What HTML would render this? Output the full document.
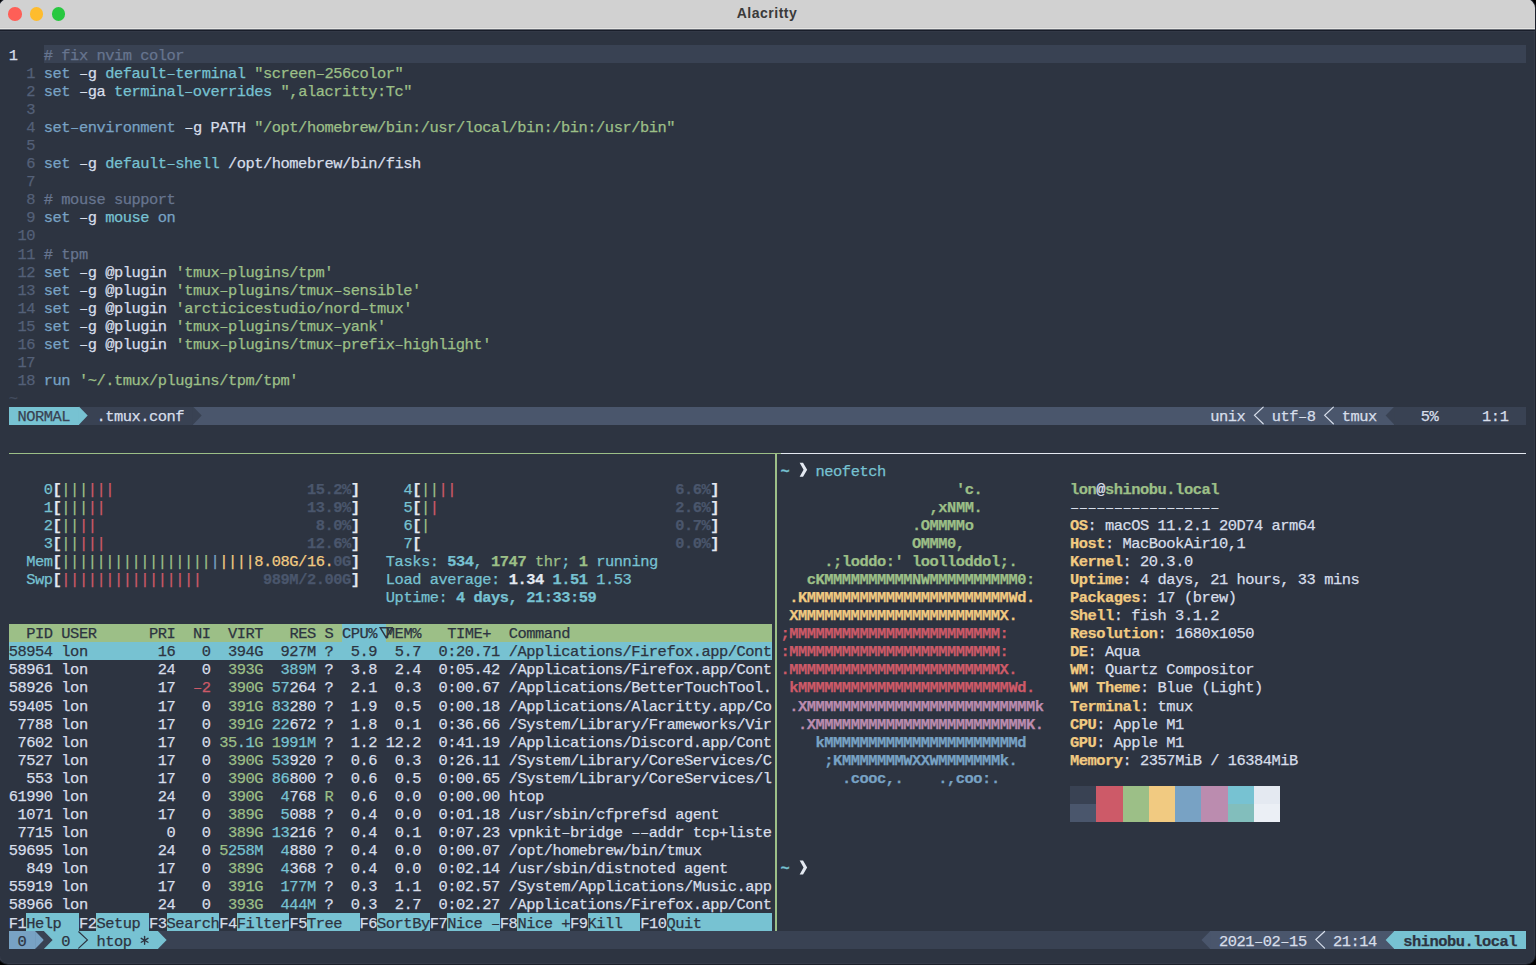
<!DOCTYPE html><html><head><meta charset="utf-8"><style>
html,body{margin:0;padding:0;background:#000;width:1536px;height:965px;overflow:hidden}
#win{position:absolute;left:-1px;top:-1px;width:1536px;height:965px;border-radius:9px;overflow:hidden;background:#2D3441;box-shadow:0 0 0 1px #1D212B}
#wb{position:absolute;left:0;top:0;width:1536px;height:965px;border-radius:9px;box-shadow:inset 0 0 0 1px rgba(230,235,255,0.045);pointer-events:none}
#tb{position:absolute;left:-1px;top:-1px;width:1538px;height:28px;background:#D1D1D1}
.hl{position:absolute;left:0;width:1538px;height:1px}
#title{position:absolute;left:-1.0px;top:-1.2px;letter-spacing:0.5px;width:1536px;height:28px;text-align:center;font:bold 14px "Liberation Sans",sans-serif;line-height:28px;color:#3A3A3A}
.d{position:absolute;width:13.6px;height:13.6px;border-radius:50%;top:7.2px}
.r{position:absolute}
.t{position:absolute;white-space:pre;font-family:"Liberation Mono",monospace;font-size:15.40px;letter-spacing:-0.4715px;line-height:18.080px;height:18.080px}
.b{font-weight:bold}
.t{-webkit-text-stroke:0.25px currentColor}
svg{position:absolute;left:0;top:0}

</style></head><body><div id="win"><div style="position:absolute;left:1px;top:1px;width:1536px;height:965px">
<div id="tb"></div>
<div class="hl" style="top:27px;background:#CDCDCD"></div>
<div class="hl" style="top:28px;background:#E6E6E4"></div>
<div class="hl" style="top:29px;background:#6A6E76"></div>
<div class="hl" style="top:30px;background:#181D29"></div>
<div class="hl" style="top:31px;background:#323846"></div>
<div id="title">Alacritty</div>
<div class="d" style="left:8.0px;background:#FE5F57"></div>
<div class="d" style="left:29.9px;background:#FEBC2E"></div>
<div class="d" style="left:51.8px;background:#28C840"></div>
<div class="r" style="left:43.83px;top:44.97px;width:1482.13px;height:18.08px;background:#394253"></div>
<div class="r" style="left:8.75px;top:406.57px;width:1517.21px;height:18.08px;background:#4A566C"></div>
<div class="r" style="left:8.75px;top:406.57px;width:70.16px;height:18.08px;background:#77C2D2"></div>
<div class="r" style="left:78.91px;top:406.57px;width:114.01px;height:18.08px;background:#394253"></div>
<div class="r" style="left:1394.41px;top:406.57px;width:131.55px;height:18.08px;background:#394253"></div>
<div class="r" style="left:8.75px;top:452.90px;width:771.76px;height:1.20px;background:#9CBF87"></div>
<div class="r" style="left:780.51px;top:452.90px;width:745.45px;height:1.20px;background:#E4E9F1"></div>
<div class="r" style="left:775.45px;top:452.90px;width:1.30px;height:479.99px;background:#9CBF87"></div>
<div class="r" style="left:8.75px;top:623.53px;width:762.99px;height:18.08px;background:#9CBF87"></div>
<div class="r" style="left:342.01px;top:623.53px;width:43.85px;height:18.08px;background:#77C2D2"></div>
<div class="r" style="left:8.75px;top:641.61px;width:762.99px;height:18.08px;background:#77C2D2"></div>
<div class="r" style="left:26.29px;top:912.81px;width:52.62px;height:18.08px;background:#77C2D2"></div>
<div class="r" style="left:96.45px;top:912.81px;width:52.62px;height:18.08px;background:#77C2D2"></div>
<div class="r" style="left:166.61px;top:912.81px;width:52.62px;height:18.08px;background:#77C2D2"></div>
<div class="r" style="left:236.77px;top:912.81px;width:52.62px;height:18.08px;background:#77C2D2"></div>
<div class="r" style="left:306.93px;top:912.81px;width:52.62px;height:18.08px;background:#77C2D2"></div>
<div class="r" style="left:377.09px;top:912.81px;width:52.62px;height:18.08px;background:#77C2D2"></div>
<div class="r" style="left:447.25px;top:912.81px;width:52.62px;height:18.08px;background:#77C2D2"></div>
<div class="r" style="left:517.41px;top:912.81px;width:52.62px;height:18.08px;background:#77C2D2"></div>
<div class="r" style="left:587.57px;top:912.81px;width:52.62px;height:18.08px;background:#77C2D2"></div>
<div class="r" style="left:666.50px;top:912.81px;width:105.24px;height:18.08px;background:#77C2D2"></div>
<div class="r" style="left:1069.92px;top:786.25px;width:26.31px;height:18.08px;background:#394253"></div>
<div class="r" style="left:1069.92px;top:804.33px;width:26.31px;height:18.08px;background:#4A566C"></div>
<div class="r" style="left:1096.23px;top:786.25px;width:26.31px;height:18.08px;background:#CD5A68"></div>
<div class="r" style="left:1096.23px;top:804.33px;width:26.31px;height:18.08px;background:#CD5A68"></div>
<div class="r" style="left:1122.54px;top:786.25px;width:26.31px;height:18.08px;background:#9CBF87"></div>
<div class="r" style="left:1122.54px;top:804.33px;width:26.31px;height:18.08px;background:#9CBF87"></div>
<div class="r" style="left:1148.85px;top:786.25px;width:26.31px;height:18.08px;background:#F1CA81"></div>
<div class="r" style="left:1148.85px;top:804.33px;width:26.31px;height:18.08px;background:#F1CA81"></div>
<div class="r" style="left:1175.16px;top:786.25px;width:26.31px;height:18.08px;background:#78A2C4"></div>
<div class="r" style="left:1175.16px;top:804.33px;width:26.31px;height:18.08px;background:#78A2C4"></div>
<div class="r" style="left:1201.47px;top:786.25px;width:26.31px;height:18.08px;background:#BB8CAF"></div>
<div class="r" style="left:1201.47px;top:804.33px;width:26.31px;height:18.08px;background:#BB8CAF"></div>
<div class="r" style="left:1227.78px;top:786.25px;width:26.31px;height:18.08px;background:#77C2D2"></div>
<div class="r" style="left:1227.78px;top:804.33px;width:26.31px;height:18.08px;background:#82BEBC"></div>
<div class="r" style="left:1254.09px;top:786.25px;width:26.31px;height:18.08px;background:#E4E9F1"></div>
<div class="r" style="left:1254.09px;top:804.33px;width:26.31px;height:18.08px;background:#EBEFF5"></div>
<div class="r" style="left:8.75px;top:930.89px;width:1517.21px;height:18.08px;background:#394253"></div>
<div class="r" style="left:8.75px;top:930.89px;width:26.31px;height:18.08px;background:#78A2C4"></div>
<div class="r" style="left:43.83px;top:930.89px;width:114.01px;height:18.08px;background:#77C2D2"></div>
<div class="r" style="left:1210.24px;top:930.89px;width:184.17px;height:18.08px;background:#4A566C"></div>
<div class="r" style="left:1394.41px;top:930.89px;width:131.55px;height:18.08px;background:#77C2D2"></div>
<div class="t" style="left:8.75px;top:46.67px;color:#D7DEEA">1</div>
<div class="t" style="left:43.83px;top:46.67px;color:#67758F"># fix nvim color</div>
<div class="t" style="left:8.75px;top:64.75px;color:#546078">  1</div>
<div class="t" style="left:43.83px;top:64.75px;color:#78A2C4">set</div>
<div class="t" style="left:78.91px;top:64.75px;color:#D7DEEA">–g</div>
<div class="t" style="left:105.22px;top:64.75px;color:#77C2D2">default–terminal</div>
<div class="t" style="left:254.31px;top:64.75px;color:#9CBF87">&quot;screen–256color&quot;</div>
<div class="t" style="left:8.75px;top:82.83px;color:#546078">  2</div>
<div class="t" style="left:43.83px;top:82.83px;color:#78A2C4">set</div>
<div class="t" style="left:78.91px;top:82.83px;color:#D7DEEA">–ga</div>
<div class="t" style="left:113.99px;top:82.83px;color:#77C2D2">terminal–overrides</div>
<div class="t" style="left:280.62px;top:82.83px;color:#9CBF87">&quot;,alacritty:Tc&quot;</div>
<div class="t" style="left:8.75px;top:100.91px;color:#546078">  3</div>
<div class="t" style="left:8.75px;top:118.99px;color:#546078">  4</div>
<div class="t" style="left:43.83px;top:118.99px;color:#78A2C4">set–environment</div>
<div class="t" style="left:184.15px;top:118.99px;color:#D7DEEA">–g</div>
<div class="t" style="left:210.46px;top:118.99px;color:#D7DEEA">PATH</div>
<div class="t" style="left:254.31px;top:118.99px;color:#9CBF87">&quot;/opt/homebrew/bin:/usr/local/bin:/bin:/usr/bin&quot;</div>
<div class="t" style="left:8.75px;top:137.07px;color:#546078">  5</div>
<div class="t" style="left:8.75px;top:155.15px;color:#546078">  6</div>
<div class="t" style="left:43.83px;top:155.15px;color:#78A2C4">set</div>
<div class="t" style="left:78.91px;top:155.15px;color:#D7DEEA">–g</div>
<div class="t" style="left:105.22px;top:155.15px;color:#77C2D2">default–shell</div>
<div class="t" style="left:228.00px;top:155.15px;color:#D7DEEA">/opt/homebrew/bin/fish</div>
<div class="t" style="left:8.75px;top:173.23px;color:#546078">  7</div>
<div class="t" style="left:8.75px;top:191.31px;color:#546078">  8</div>
<div class="t" style="left:43.83px;top:191.31px;color:#67758F"># mouse support</div>
<div class="t" style="left:8.75px;top:209.39px;color:#546078">  9</div>
<div class="t" style="left:43.83px;top:209.39px;color:#78A2C4">set</div>
<div class="t" style="left:78.91px;top:209.39px;color:#D7DEEA">–g</div>
<div class="t" style="left:105.22px;top:209.39px;color:#77C2D2">mouse</div>
<div class="t" style="left:157.84px;top:209.39px;color:#78A2C4">on</div>
<div class="t" style="left:8.75px;top:227.47px;color:#546078"> 10</div>
<div class="t" style="left:8.75px;top:245.55px;color:#546078"> 11</div>
<div class="t" style="left:43.83px;top:245.55px;color:#67758F"># tpm</div>
<div class="t" style="left:8.75px;top:263.63px;color:#546078"> 12</div>
<div class="t" style="left:43.83px;top:263.63px;color:#78A2C4">set</div>
<div class="t" style="left:78.91px;top:263.63px;color:#D7DEEA">–g</div>
<div class="t" style="left:105.22px;top:263.63px;color:#D7DEEA">@plugin</div>
<div class="t" style="left:175.38px;top:263.63px;color:#9CBF87">&#x27;tmux–plugins/tpm&#x27;</div>
<div class="t" style="left:8.75px;top:281.71px;color:#546078"> 13</div>
<div class="t" style="left:43.83px;top:281.71px;color:#78A2C4">set</div>
<div class="t" style="left:78.91px;top:281.71px;color:#D7DEEA">–g</div>
<div class="t" style="left:105.22px;top:281.71px;color:#D7DEEA">@plugin</div>
<div class="t" style="left:175.38px;top:281.71px;color:#9CBF87">&#x27;tmux–plugins/tmux–sensible&#x27;</div>
<div class="t" style="left:8.75px;top:299.79px;color:#546078"> 14</div>
<div class="t" style="left:43.83px;top:299.79px;color:#78A2C4">set</div>
<div class="t" style="left:78.91px;top:299.79px;color:#D7DEEA">–g</div>
<div class="t" style="left:105.22px;top:299.79px;color:#D7DEEA">@plugin</div>
<div class="t" style="left:175.38px;top:299.79px;color:#9CBF87">&#x27;arcticicestudio/nord–tmux&#x27;</div>
<div class="t" style="left:8.75px;top:317.87px;color:#546078"> 15</div>
<div class="t" style="left:43.83px;top:317.87px;color:#78A2C4">set</div>
<div class="t" style="left:78.91px;top:317.87px;color:#D7DEEA">–g</div>
<div class="t" style="left:105.22px;top:317.87px;color:#D7DEEA">@plugin</div>
<div class="t" style="left:175.38px;top:317.87px;color:#9CBF87">&#x27;tmux–plugins/tmux–yank&#x27;</div>
<div class="t" style="left:8.75px;top:335.95px;color:#546078"> 16</div>
<div class="t" style="left:43.83px;top:335.95px;color:#78A2C4">set</div>
<div class="t" style="left:78.91px;top:335.95px;color:#D7DEEA">–g</div>
<div class="t" style="left:105.22px;top:335.95px;color:#D7DEEA">@plugin</div>
<div class="t" style="left:175.38px;top:335.95px;color:#9CBF87">&#x27;tmux–plugins/tmux–prefix–highlight&#x27;</div>
<div class="t" style="left:8.75px;top:354.03px;color:#546078"> 17</div>
<div class="t" style="left:8.75px;top:372.11px;color:#546078"> 18</div>
<div class="t" style="left:43.83px;top:372.11px;color:#78A2C4">run</div>
<div class="t" style="left:78.91px;top:372.11px;color:#9CBF87">&#x27;~/.tmux/plugins/tpm/tpm&#x27;</div>
<div class="t" style="left:8.75px;top:390.19px;color:#434C5E">~</div>
<div class="t" style="left:17.52px;top:408.27px;color:#394253">NORMAL</div>
<div class="t" style="left:96.45px;top:408.27px;color:#D7DEEA">.tmux.conf</div>
<div class="t" style="left:1210.24px;top:408.27px;color:#D7DEEA">unix</div>
<div class="t" style="left:1271.63px;top:408.27px;color:#D7DEEA">utf–8</div>
<div class="t" style="left:1341.79px;top:408.27px;color:#D7DEEA">tmux</div>
<div class="t" style="left:1420.72px;top:408.27px;color:#D7DEEA">5%</div>
<div class="t" style="left:1482.11px;top:408.27px;color:#D7DEEA">1:1</div>
<div class="t" style="left:43.83px;top:480.59px;color:#77C2D2">0</div>
<div class="t b" style="left:52.60px;top:480.59px;color:#E4E9F1">[</div>
<div class="t" style="left:61.37px;top:480.59px;color:#9CBF87">|||</div>
<div class="t" style="left:87.68px;top:480.59px;color:#CD5A68">|||</div>
<div class="t b" style="left:306.93px;top:480.59px;color:#4A566C">15.2%</div>
<div class="t b" style="left:350.78px;top:480.59px;color:#E4E9F1">]</div>
<div class="t" style="left:43.83px;top:498.67px;color:#77C2D2">1</div>
<div class="t b" style="left:52.60px;top:498.67px;color:#E4E9F1">[</div>
<div class="t" style="left:61.37px;top:498.67px;color:#9CBF87">|||</div>
<div class="t" style="left:87.68px;top:498.67px;color:#CD5A68">||</div>
<div class="t b" style="left:306.93px;top:498.67px;color:#4A566C">13.9%</div>
<div class="t b" style="left:350.78px;top:498.67px;color:#E4E9F1">]</div>
<div class="t" style="left:43.83px;top:516.75px;color:#77C2D2">2</div>
<div class="t b" style="left:52.60px;top:516.75px;color:#E4E9F1">[</div>
<div class="t" style="left:61.37px;top:516.75px;color:#9CBF87">||</div>
<div class="t" style="left:78.91px;top:516.75px;color:#CD5A68">||</div>
<div class="t b" style="left:306.93px;top:516.75px;color:#4A566C"> 8.0%</div>
<div class="t b" style="left:350.78px;top:516.75px;color:#E4E9F1">]</div>
<div class="t" style="left:43.83px;top:534.83px;color:#77C2D2">3</div>
<div class="t b" style="left:52.60px;top:534.83px;color:#E4E9F1">[</div>
<div class="t" style="left:61.37px;top:534.83px;color:#9CBF87">||</div>
<div class="t" style="left:78.91px;top:534.83px;color:#CD5A68">|||</div>
<div class="t b" style="left:306.93px;top:534.83px;color:#4A566C">12.6%</div>
<div class="t b" style="left:350.78px;top:534.83px;color:#E4E9F1">]</div>
<div class="t" style="left:26.29px;top:552.91px;color:#77C2D2">Mem</div>
<div class="t b" style="left:52.60px;top:552.91px;color:#E4E9F1">[</div>
<div class="t" style="left:61.37px;top:552.91px;color:#9CBF87">|||||||||||||||||</div>
<div class="t" style="left:210.46px;top:552.91px;color:#78A2C4">|</div>
<div class="t" style="left:219.23px;top:552.91px;color:#F1CA81">||||</div>
<div class="t" style="left:254.31px;top:552.91px;color:#F1CA81">8.08G/16.</div>
<div class="t b" style="left:333.24px;top:552.91px;color:#4A566C">0G</div>
<div class="t b" style="left:350.78px;top:552.91px;color:#E4E9F1">]</div>
<div class="t" style="left:26.29px;top:570.99px;color:#77C2D2">Swp</div>
<div class="t b" style="left:52.60px;top:570.99px;color:#E4E9F1">[</div>
<div class="t" style="left:61.37px;top:570.99px;color:#CD5A68">||||||||||||||||</div>
<div class="t b" style="left:263.08px;top:570.99px;color:#4A566C">989M/2.00G</div>
<div class="t b" style="left:350.78px;top:570.99px;color:#E4E9F1">]</div>
<div class="t" style="left:403.40px;top:480.59px;color:#77C2D2">4</div>
<div class="t b" style="left:412.17px;top:480.59px;color:#E4E9F1">[</div>
<div class="t" style="left:420.94px;top:480.59px;color:#9CBF87">||</div>
<div class="t" style="left:438.48px;top:480.59px;color:#CD5A68">||</div>
<div class="t b" style="left:675.27px;top:480.59px;color:#4A566C">6.6%</div>
<div class="t b" style="left:710.35px;top:480.59px;color:#E4E9F1">]</div>
<div class="t" style="left:403.40px;top:498.67px;color:#77C2D2">5</div>
<div class="t b" style="left:412.17px;top:498.67px;color:#E4E9F1">[</div>
<div class="t" style="left:420.94px;top:498.67px;color:#9CBF87">|</div>
<div class="t" style="left:429.71px;top:498.67px;color:#CD5A68">|</div>
<div class="t b" style="left:675.27px;top:498.67px;color:#4A566C">2.6%</div>
<div class="t b" style="left:710.35px;top:498.67px;color:#E4E9F1">]</div>
<div class="t" style="left:403.40px;top:516.75px;color:#77C2D2">6</div>
<div class="t b" style="left:412.17px;top:516.75px;color:#E4E9F1">[</div>
<div class="t" style="left:420.94px;top:516.75px;color:#9CBF87">|</div>
<div class="t b" style="left:675.27px;top:516.75px;color:#4A566C">0.7%</div>
<div class="t b" style="left:710.35px;top:516.75px;color:#E4E9F1">]</div>
<div class="t" style="left:403.40px;top:534.83px;color:#77C2D2">7</div>
<div class="t b" style="left:412.17px;top:534.83px;color:#E4E9F1">[</div>
<div class="t b" style="left:675.27px;top:534.83px;color:#4A566C">0.0%</div>
<div class="t b" style="left:710.35px;top:534.83px;color:#E4E9F1">]</div>
<div class="t" style="left:385.86px;top:552.91px;color:#77C2D2">Tasks: </div>
<div class="t b" style="left:447.25px;top:552.91px;color:#77C2D2">534</div>
<div class="t" style="left:473.56px;top:552.91px;color:#77C2D2">, </div>
<div class="t b" style="left:491.10px;top:552.91px;color:#9CBF87">1747</div>
<div class="t" style="left:526.18px;top:552.91px;color:#9CBF87"> thr</div>
<div class="t" style="left:561.26px;top:552.91px;color:#77C2D2">; </div>
<div class="t b" style="left:578.80px;top:552.91px;color:#9CBF87">1</div>
<div class="t" style="left:587.57px;top:552.91px;color:#77C2D2"> running</div>
<div class="t" style="left:385.86px;top:570.99px;color:#77C2D2">Load average: </div>
<div class="t b" style="left:508.64px;top:570.99px;color:#E4E9F1">1.34</div>
<div class="t b" style="left:552.49px;top:570.99px;color:#77C2D2">1.51</div>
<div class="t" style="left:596.34px;top:570.99px;color:#77C2D2">1.53</div>
<div class="t" style="left:385.86px;top:589.07px;color:#77C2D2">Uptime: </div>
<div class="t b" style="left:456.02px;top:589.07px;color:#77C2D2">4 days, 21:33:59</div>
<div class="t" style="left:26.29px;top:625.23px;color:#2D3441">PID</div>
<div class="t" style="left:61.37px;top:625.23px;color:#2D3441">USER</div>
<div class="t" style="left:149.07px;top:625.23px;color:#2D3441">PRI</div>
<div class="t" style="left:192.92px;top:625.23px;color:#2D3441">NI</div>
<div class="t" style="left:228.00px;top:625.23px;color:#2D3441">VIRT</div>
<div class="t" style="left:289.39px;top:625.23px;color:#2D3441">RES</div>
<div class="t" style="left:324.47px;top:625.23px;color:#2D3441">S</div>
<div class="t" style="left:342.01px;top:625.23px;color:#2D3441">CPU%</div>
<div class="t" style="left:385.86px;top:625.23px;color:#2D3441">MEM%</div>
<div class="t" style="left:447.25px;top:625.23px;color:#2D3441">TIME+</div>
<div class="t" style="left:508.64px;top:625.23px;color:#2D3441">Command</div>
<div class="t" style="left:8.75px;top:643.31px;color:#2D3441">58954</div>
<div class="t" style="left:61.37px;top:643.31px;color:#2D3441">lon</div>
<div class="t" style="left:157.84px;top:643.31px;color:#2D3441">16</div>
<div class="t" style="left:201.69px;top:643.31px;color:#2D3441">0</div>
<div class="t" style="left:228.00px;top:643.31px;color:#2D3441">394G</div>
<div class="t" style="left:280.62px;top:643.31px;color:#2D3441">927M</div>
<div class="t" style="left:324.47px;top:643.31px;color:#2D3441">?</div>
<div class="t" style="left:350.78px;top:643.31px;color:#2D3441">5.9</div>
<div class="t" style="left:394.63px;top:643.31px;color:#2D3441">5.7</div>
<div class="t" style="left:438.48px;top:643.31px;color:#2D3441">0:20.71</div>
<div class="t" style="left:508.64px;top:643.31px;color:#2D3441">/Applications/Firefox.app/Cont</div>
<div class="t" style="left:8.75px;top:661.39px;color:#D7DEEA">58961</div>
<div class="t" style="left:61.37px;top:661.39px;color:#D7DEEA">lon</div>
<div class="t" style="left:157.84px;top:661.39px;color:#D7DEEA">24</div>
<div class="t" style="left:201.69px;top:661.39px;color:#D7DEEA">0</div>
<div class="t" style="left:228.00px;top:661.39px;color:#9CBF87">393G</div>
<div class="t" style="left:280.62px;top:661.39px;color:#77C2D2">389M</div>
<div class="t" style="left:324.47px;top:661.39px;color:#D7DEEA">?</div>
<div class="t" style="left:350.78px;top:661.39px;color:#D7DEEA">3.8</div>
<div class="t" style="left:394.63px;top:661.39px;color:#D7DEEA">2.4</div>
<div class="t" style="left:438.48px;top:661.39px;color:#D7DEEA">0:05.42</div>
<div class="t" style="left:508.64px;top:661.39px;color:#D7DEEA">/Applications/Firefox.app/Cont</div>
<div class="t" style="left:8.75px;top:679.47px;color:#D7DEEA">58926</div>
<div class="t" style="left:61.37px;top:679.47px;color:#D7DEEA">lon</div>
<div class="t" style="left:157.84px;top:679.47px;color:#D7DEEA">17</div>
<div class="t" style="left:192.92px;top:679.47px;color:#CD5A68">–2</div>
<div class="t" style="left:228.00px;top:679.47px;color:#9CBF87">390G</div>
<div class="t" style="left:271.85px;top:679.47px;color:#77C2D2">57</div>
<div class="t" style="left:289.39px;top:679.47px;color:#D7DEEA">264</div>
<div class="t" style="left:324.47px;top:679.47px;color:#D7DEEA">?</div>
<div class="t" style="left:350.78px;top:679.47px;color:#D7DEEA">2.1</div>
<div class="t" style="left:394.63px;top:679.47px;color:#D7DEEA">0.3</div>
<div class="t" style="left:438.48px;top:679.47px;color:#D7DEEA">0:00.67</div>
<div class="t" style="left:508.64px;top:679.47px;color:#D7DEEA">/Applications/BetterTouchTool.</div>
<div class="t" style="left:8.75px;top:697.55px;color:#D7DEEA">59405</div>
<div class="t" style="left:61.37px;top:697.55px;color:#D7DEEA">lon</div>
<div class="t" style="left:157.84px;top:697.55px;color:#D7DEEA">17</div>
<div class="t" style="left:201.69px;top:697.55px;color:#D7DEEA">0</div>
<div class="t" style="left:228.00px;top:697.55px;color:#9CBF87">391G</div>
<div class="t" style="left:271.85px;top:697.55px;color:#77C2D2">83</div>
<div class="t" style="left:289.39px;top:697.55px;color:#D7DEEA">280</div>
<div class="t" style="left:324.47px;top:697.55px;color:#D7DEEA">?</div>
<div class="t" style="left:350.78px;top:697.55px;color:#D7DEEA">1.9</div>
<div class="t" style="left:394.63px;top:697.55px;color:#D7DEEA">0.5</div>
<div class="t" style="left:438.48px;top:697.55px;color:#D7DEEA">0:00.18</div>
<div class="t" style="left:508.64px;top:697.55px;color:#D7DEEA">/Applications/Alacritty.app/Co</div>
<div class="t" style="left:17.52px;top:715.63px;color:#D7DEEA">7788</div>
<div class="t" style="left:61.37px;top:715.63px;color:#D7DEEA">lon</div>
<div class="t" style="left:157.84px;top:715.63px;color:#D7DEEA">17</div>
<div class="t" style="left:201.69px;top:715.63px;color:#D7DEEA">0</div>
<div class="t" style="left:228.00px;top:715.63px;color:#9CBF87">391G</div>
<div class="t" style="left:271.85px;top:715.63px;color:#77C2D2">22</div>
<div class="t" style="left:289.39px;top:715.63px;color:#D7DEEA">672</div>
<div class="t" style="left:324.47px;top:715.63px;color:#D7DEEA">?</div>
<div class="t" style="left:350.78px;top:715.63px;color:#D7DEEA">1.8</div>
<div class="t" style="left:394.63px;top:715.63px;color:#D7DEEA">0.1</div>
<div class="t" style="left:438.48px;top:715.63px;color:#D7DEEA">0:36.66</div>
<div class="t" style="left:508.64px;top:715.63px;color:#D7DEEA">/System/Library/Frameworks/Vir</div>
<div class="t" style="left:17.52px;top:733.71px;color:#D7DEEA">7602</div>
<div class="t" style="left:61.37px;top:733.71px;color:#D7DEEA">lon</div>
<div class="t" style="left:157.84px;top:733.71px;color:#D7DEEA">17</div>
<div class="t" style="left:201.69px;top:733.71px;color:#D7DEEA">0</div>
<div class="t" style="left:219.23px;top:733.71px;color:#9CBF87">35</div>
<div class="t" style="left:236.77px;top:733.71px;color:#77C2D2">.1</div>
<div class="t" style="left:254.31px;top:733.71px;color:#9CBF87">G</div>
<div class="t" style="left:271.85px;top:733.71px;color:#9CBF87">1</div>
<div class="t" style="left:280.62px;top:733.71px;color:#77C2D2">991M</div>
<div class="t" style="left:324.47px;top:733.71px;color:#D7DEEA">?</div>
<div class="t" style="left:350.78px;top:733.71px;color:#D7DEEA">1.2</div>
<div class="t" style="left:385.86px;top:733.71px;color:#D7DEEA">12.2</div>
<div class="t" style="left:438.48px;top:733.71px;color:#D7DEEA">0:41.19</div>
<div class="t" style="left:508.64px;top:733.71px;color:#D7DEEA">/Applications/Discord.app/Cont</div>
<div class="t" style="left:17.52px;top:751.79px;color:#D7DEEA">7527</div>
<div class="t" style="left:61.37px;top:751.79px;color:#D7DEEA">lon</div>
<div class="t" style="left:157.84px;top:751.79px;color:#D7DEEA">17</div>
<div class="t" style="left:201.69px;top:751.79px;color:#D7DEEA">0</div>
<div class="t" style="left:228.00px;top:751.79px;color:#9CBF87">390G</div>
<div class="t" style="left:271.85px;top:751.79px;color:#77C2D2">53</div>
<div class="t" style="left:289.39px;top:751.79px;color:#D7DEEA">920</div>
<div class="t" style="left:324.47px;top:751.79px;color:#D7DEEA">?</div>
<div class="t" style="left:350.78px;top:751.79px;color:#D7DEEA">0.6</div>
<div class="t" style="left:394.63px;top:751.79px;color:#D7DEEA">0.3</div>
<div class="t" style="left:438.48px;top:751.79px;color:#D7DEEA">0:26.11</div>
<div class="t" style="left:508.64px;top:751.79px;color:#D7DEEA">/System/Library/CoreServices/C</div>
<div class="t" style="left:26.29px;top:769.87px;color:#D7DEEA">553</div>
<div class="t" style="left:61.37px;top:769.87px;color:#D7DEEA">lon</div>
<div class="t" style="left:157.84px;top:769.87px;color:#D7DEEA">17</div>
<div class="t" style="left:201.69px;top:769.87px;color:#D7DEEA">0</div>
<div class="t" style="left:228.00px;top:769.87px;color:#9CBF87">390G</div>
<div class="t" style="left:271.85px;top:769.87px;color:#77C2D2">86</div>
<div class="t" style="left:289.39px;top:769.87px;color:#D7DEEA">800</div>
<div class="t" style="left:324.47px;top:769.87px;color:#D7DEEA">?</div>
<div class="t" style="left:350.78px;top:769.87px;color:#D7DEEA">0.6</div>
<div class="t" style="left:394.63px;top:769.87px;color:#D7DEEA">0.5</div>
<div class="t" style="left:438.48px;top:769.87px;color:#D7DEEA">0:00.65</div>
<div class="t" style="left:508.64px;top:769.87px;color:#D7DEEA">/System/Library/CoreServices/l</div>
<div class="t" style="left:8.75px;top:787.95px;color:#D7DEEA">61990</div>
<div class="t" style="left:61.37px;top:787.95px;color:#D7DEEA">lon</div>
<div class="t" style="left:157.84px;top:787.95px;color:#D7DEEA">24</div>
<div class="t" style="left:201.69px;top:787.95px;color:#D7DEEA">0</div>
<div class="t" style="left:228.00px;top:787.95px;color:#9CBF87">390G</div>
<div class="t" style="left:280.62px;top:787.95px;color:#77C2D2">4</div>
<div class="t" style="left:289.39px;top:787.95px;color:#D7DEEA">768</div>
<div class="t" style="left:324.47px;top:787.95px;color:#9CBF87">R</div>
<div class="t" style="left:350.78px;top:787.95px;color:#D7DEEA">0.6</div>
<div class="t" style="left:394.63px;top:787.95px;color:#D7DEEA">0.0</div>
<div class="t" style="left:438.48px;top:787.95px;color:#D7DEEA">0:00.00</div>
<div class="t" style="left:508.64px;top:787.95px;color:#D7DEEA">htop</div>
<div class="t" style="left:17.52px;top:806.03px;color:#D7DEEA">1071</div>
<div class="t" style="left:61.37px;top:806.03px;color:#D7DEEA">lon</div>
<div class="t" style="left:157.84px;top:806.03px;color:#D7DEEA">17</div>
<div class="t" style="left:201.69px;top:806.03px;color:#D7DEEA">0</div>
<div class="t" style="left:228.00px;top:806.03px;color:#9CBF87">389G</div>
<div class="t" style="left:280.62px;top:806.03px;color:#77C2D2">5</div>
<div class="t" style="left:289.39px;top:806.03px;color:#D7DEEA">088</div>
<div class="t" style="left:324.47px;top:806.03px;color:#D7DEEA">?</div>
<div class="t" style="left:350.78px;top:806.03px;color:#D7DEEA">0.4</div>
<div class="t" style="left:394.63px;top:806.03px;color:#D7DEEA">0.0</div>
<div class="t" style="left:438.48px;top:806.03px;color:#D7DEEA">0:01.18</div>
<div class="t" style="left:508.64px;top:806.03px;color:#D7DEEA">/usr/sbin/cfprefsd agent</div>
<div class="t" style="left:17.52px;top:824.11px;color:#D7DEEA">7715</div>
<div class="t" style="left:61.37px;top:824.11px;color:#D7DEEA">lon</div>
<div class="t" style="left:166.61px;top:824.11px;color:#D7DEEA">0</div>
<div class="t" style="left:201.69px;top:824.11px;color:#D7DEEA">0</div>
<div class="t" style="left:228.00px;top:824.11px;color:#9CBF87">389G</div>
<div class="t" style="left:271.85px;top:824.11px;color:#77C2D2">13</div>
<div class="t" style="left:289.39px;top:824.11px;color:#D7DEEA">216</div>
<div class="t" style="left:324.47px;top:824.11px;color:#D7DEEA">?</div>
<div class="t" style="left:350.78px;top:824.11px;color:#D7DEEA">0.4</div>
<div class="t" style="left:394.63px;top:824.11px;color:#D7DEEA">0.1</div>
<div class="t" style="left:438.48px;top:824.11px;color:#D7DEEA">0:07.23</div>
<div class="t" style="left:508.64px;top:824.11px;color:#D7DEEA">vpnkit–bridge ––addr tcp+liste</div>
<div class="t" style="left:8.75px;top:842.19px;color:#D7DEEA">59695</div>
<div class="t" style="left:61.37px;top:842.19px;color:#D7DEEA">lon</div>
<div class="t" style="left:157.84px;top:842.19px;color:#D7DEEA">24</div>
<div class="t" style="left:201.69px;top:842.19px;color:#D7DEEA">0</div>
<div class="t" style="left:219.23px;top:842.19px;color:#9CBF87">5</div>
<div class="t" style="left:228.00px;top:842.19px;color:#77C2D2">258M</div>
<div class="t" style="left:280.62px;top:842.19px;color:#77C2D2">4</div>
<div class="t" style="left:289.39px;top:842.19px;color:#D7DEEA">880</div>
<div class="t" style="left:324.47px;top:842.19px;color:#D7DEEA">?</div>
<div class="t" style="left:350.78px;top:842.19px;color:#D7DEEA">0.4</div>
<div class="t" style="left:394.63px;top:842.19px;color:#D7DEEA">0.0</div>
<div class="t" style="left:438.48px;top:842.19px;color:#D7DEEA">0:00.07</div>
<div class="t" style="left:508.64px;top:842.19px;color:#D7DEEA">/opt/homebrew/bin/tmux</div>
<div class="t" style="left:26.29px;top:860.27px;color:#D7DEEA">849</div>
<div class="t" style="left:61.37px;top:860.27px;color:#D7DEEA">lon</div>
<div class="t" style="left:157.84px;top:860.27px;color:#D7DEEA">17</div>
<div class="t" style="left:201.69px;top:860.27px;color:#D7DEEA">0</div>
<div class="t" style="left:228.00px;top:860.27px;color:#9CBF87">389G</div>
<div class="t" style="left:280.62px;top:860.27px;color:#77C2D2">4</div>
<div class="t" style="left:289.39px;top:860.27px;color:#D7DEEA">368</div>
<div class="t" style="left:324.47px;top:860.27px;color:#D7DEEA">?</div>
<div class="t" style="left:350.78px;top:860.27px;color:#D7DEEA">0.4</div>
<div class="t" style="left:394.63px;top:860.27px;color:#D7DEEA">0.0</div>
<div class="t" style="left:438.48px;top:860.27px;color:#D7DEEA">0:02.14</div>
<div class="t" style="left:508.64px;top:860.27px;color:#D7DEEA">/usr/sbin/distnoted agent</div>
<div class="t" style="left:8.75px;top:878.35px;color:#D7DEEA">55919</div>
<div class="t" style="left:61.37px;top:878.35px;color:#D7DEEA">lon</div>
<div class="t" style="left:157.84px;top:878.35px;color:#D7DEEA">17</div>
<div class="t" style="left:201.69px;top:878.35px;color:#D7DEEA">0</div>
<div class="t" style="left:228.00px;top:878.35px;color:#9CBF87">391G</div>
<div class="t" style="left:280.62px;top:878.35px;color:#77C2D2">177M</div>
<div class="t" style="left:324.47px;top:878.35px;color:#D7DEEA">?</div>
<div class="t" style="left:350.78px;top:878.35px;color:#D7DEEA">0.3</div>
<div class="t" style="left:394.63px;top:878.35px;color:#D7DEEA">1.1</div>
<div class="t" style="left:438.48px;top:878.35px;color:#D7DEEA">0:02.57</div>
<div class="t" style="left:508.64px;top:878.35px;color:#D7DEEA">/System/Applications/Music.app</div>
<div class="t" style="left:8.75px;top:896.43px;color:#D7DEEA">58966</div>
<div class="t" style="left:61.37px;top:896.43px;color:#D7DEEA">lon</div>
<div class="t" style="left:157.84px;top:896.43px;color:#D7DEEA">24</div>
<div class="t" style="left:201.69px;top:896.43px;color:#D7DEEA">0</div>
<div class="t" style="left:228.00px;top:896.43px;color:#9CBF87">393G</div>
<div class="t" style="left:280.62px;top:896.43px;color:#77C2D2">444M</div>
<div class="t" style="left:324.47px;top:896.43px;color:#D7DEEA">?</div>
<div class="t" style="left:350.78px;top:896.43px;color:#D7DEEA">0.3</div>
<div class="t" style="left:394.63px;top:896.43px;color:#D7DEEA">2.7</div>
<div class="t" style="left:438.48px;top:896.43px;color:#D7DEEA">0:02.27</div>
<div class="t" style="left:508.64px;top:896.43px;color:#D7DEEA">/Applications/Firefox.app/Cont</div>
<div class="t" style="left:8.75px;top:914.51px;color:#D7DEEA">F1</div>
<div class="t" style="left:26.29px;top:914.51px;color:#2D3441">Help</div>
<div class="t" style="left:78.91px;top:914.51px;color:#D7DEEA">F2</div>
<div class="t" style="left:96.45px;top:914.51px;color:#2D3441">Setup</div>
<div class="t" style="left:149.07px;top:914.51px;color:#D7DEEA">F3</div>
<div class="t" style="left:166.61px;top:914.51px;color:#2D3441">Search</div>
<div class="t" style="left:219.23px;top:914.51px;color:#D7DEEA">F4</div>
<div class="t" style="left:236.77px;top:914.51px;color:#2D3441">Filter</div>
<div class="t" style="left:289.39px;top:914.51px;color:#D7DEEA">F5</div>
<div class="t" style="left:306.93px;top:914.51px;color:#2D3441">Tree</div>
<div class="t" style="left:359.55px;top:914.51px;color:#D7DEEA">F6</div>
<div class="t" style="left:377.09px;top:914.51px;color:#2D3441">SortBy</div>
<div class="t" style="left:429.71px;top:914.51px;color:#D7DEEA">F7</div>
<div class="t" style="left:447.25px;top:914.51px;color:#2D3441">Nice –</div>
<div class="t" style="left:499.87px;top:914.51px;color:#D7DEEA">F8</div>
<div class="t" style="left:517.41px;top:914.51px;color:#2D3441">Nice +</div>
<div class="t" style="left:570.03px;top:914.51px;color:#D7DEEA">F9</div>
<div class="t" style="left:587.57px;top:914.51px;color:#2D3441">Kill</div>
<div class="t" style="left:640.19px;top:914.51px;color:#D7DEEA">F10</div>
<div class="t" style="left:666.50px;top:914.51px;color:#2D3441">Quit</div>
<div class="t b" style="left:780.51px;top:462.51px;color:#77C2D2">~</div>
<div class="t" style="left:815.59px;top:462.51px;color:#77C2D2">neofetch</div>
<div class="t b" style="left:780.51px;top:860.27px;color:#77C2D2">~</div>
<div class="t b" style="left:955.91px;top:480.59px;color:#9CBF87">&#x27;c.</div>
<div class="t b" style="left:929.60px;top:498.67px;color:#9CBF87">,xNMM.</div>
<div class="t b" style="left:912.06px;top:516.75px;color:#9CBF87">.OMMMMo</div>
<div class="t b" style="left:912.06px;top:534.83px;color:#9CBF87">OMMM0,</div>
<div class="t b" style="left:824.36px;top:552.91px;color:#9CBF87">.;loddo:&#x27; loolloddol;.</div>
<div class="t b" style="left:806.82px;top:570.99px;color:#9CBF87">cKMMMMMMMMMMNWMMMMMMMMMM0:</div>
<div class="t b" style="left:789.28px;top:589.07px;color:#F1CA81">.KMMMMMMMMMMMMMMMMMMMMMMMWd.</div>
<div class="t b" style="left:789.28px;top:607.15px;color:#F1CA81">XMMMMMMMMMMMMMMMMMMMMMMMX.</div>
<div class="t b" style="left:780.51px;top:625.23px;color:#CD5A68">;MMMMMMMMMMMMMMMMMMMMMMMM:</div>
<div class="t b" style="left:780.51px;top:643.31px;color:#CD5A68">:MMMMMMMMMMMMMMMMMMMMMMMM:</div>
<div class="t b" style="left:780.51px;top:661.39px;color:#CD5A68">.MMMMMMMMMMMMMMMMMMMMMMMMX.</div>
<div class="t b" style="left:789.28px;top:679.47px;color:#CD5A68">kMMMMMMMMMMMMMMMMMMMMMMMMWd.</div>
<div class="t b" style="left:789.28px;top:697.55px;color:#BB8CAF">.XMMMMMMMMMMMMMMMMMMMMMMMMMMk</div>
<div class="t b" style="left:798.05px;top:715.63px;color:#BB8CAF">.XMMMMMMMMMMMMMMMMMMMMMMMMK.</div>
<div class="t b" style="left:815.59px;top:733.71px;color:#78A2C4">kMMMMMMMMMMMMMMMMMMMMMMd</div>
<div class="t b" style="left:824.36px;top:751.79px;color:#78A2C4">;KMMMMMMMWXXWMMMMMMMk.</div>
<div class="t b" style="left:841.90px;top:769.87px;color:#78A2C4">.cooc,.    .,coo:.</div>
<div class="t b" style="left:1069.92px;top:480.59px;color:#9CBF87">lon</div>
<div class="t b" style="left:1096.23px;top:480.59px;color:#D7DEEA">@</div>
<div class="t b" style="left:1105.00px;top:480.59px;color:#9CBF87">shinobu.local</div>
<div class="t" style="left:1069.92px;top:498.67px;color:#D7DEEA">–––––––––––––––––</div>
<div class="t b" style="left:1069.92px;top:516.75px;color:#F1CA81">OS</div>
<div class="t" style="left:1087.46px;top:516.75px;color:#D7DEEA">: </div>
<div class="t" style="left:1105.00px;top:516.75px;color:#D7DEEA">macOS 11.2.1 20D74 arm64</div>
<div class="t b" style="left:1069.92px;top:534.83px;color:#F1CA81">Host</div>
<div class="t" style="left:1105.00px;top:534.83px;color:#D7DEEA">: </div>
<div class="t" style="left:1122.54px;top:534.83px;color:#D7DEEA">MacBookAir10,1</div>
<div class="t b" style="left:1069.92px;top:552.91px;color:#F1CA81">Kernel</div>
<div class="t" style="left:1122.54px;top:552.91px;color:#D7DEEA">: </div>
<div class="t" style="left:1140.08px;top:552.91px;color:#D7DEEA">20.3.0</div>
<div class="t b" style="left:1069.92px;top:570.99px;color:#F1CA81">Uptime</div>
<div class="t" style="left:1122.54px;top:570.99px;color:#D7DEEA">: </div>
<div class="t" style="left:1140.08px;top:570.99px;color:#D7DEEA">4 days, 21 hours, 33 mins</div>
<div class="t b" style="left:1069.92px;top:589.07px;color:#F1CA81">Packages</div>
<div class="t" style="left:1140.08px;top:589.07px;color:#D7DEEA">: </div>
<div class="t" style="left:1157.62px;top:589.07px;color:#D7DEEA">17 (brew)</div>
<div class="t b" style="left:1069.92px;top:607.15px;color:#F1CA81">Shell</div>
<div class="t" style="left:1113.77px;top:607.15px;color:#D7DEEA">: </div>
<div class="t" style="left:1131.31px;top:607.15px;color:#D7DEEA">fish 3.1.2</div>
<div class="t b" style="left:1069.92px;top:625.23px;color:#F1CA81">Resolution</div>
<div class="t" style="left:1157.62px;top:625.23px;color:#D7DEEA">: </div>
<div class="t" style="left:1175.16px;top:625.23px;color:#D7DEEA">1680x1050</div>
<div class="t b" style="left:1069.92px;top:643.31px;color:#F1CA81">DE</div>
<div class="t" style="left:1087.46px;top:643.31px;color:#D7DEEA">: </div>
<div class="t" style="left:1105.00px;top:643.31px;color:#D7DEEA">Aqua</div>
<div class="t b" style="left:1069.92px;top:661.39px;color:#F1CA81">WM</div>
<div class="t" style="left:1087.46px;top:661.39px;color:#D7DEEA">: </div>
<div class="t" style="left:1105.00px;top:661.39px;color:#D7DEEA">Quartz Compositor</div>
<div class="t b" style="left:1069.92px;top:679.47px;color:#F1CA81">WM Theme</div>
<div class="t" style="left:1140.08px;top:679.47px;color:#D7DEEA">: </div>
<div class="t" style="left:1157.62px;top:679.47px;color:#D7DEEA">Blue (Light)</div>
<div class="t b" style="left:1069.92px;top:697.55px;color:#F1CA81">Terminal</div>
<div class="t" style="left:1140.08px;top:697.55px;color:#D7DEEA">: </div>
<div class="t" style="left:1157.62px;top:697.55px;color:#D7DEEA">tmux</div>
<div class="t b" style="left:1069.92px;top:715.63px;color:#F1CA81">CPU</div>
<div class="t" style="left:1096.23px;top:715.63px;color:#D7DEEA">: </div>
<div class="t" style="left:1113.77px;top:715.63px;color:#D7DEEA">Apple M1</div>
<div class="t b" style="left:1069.92px;top:733.71px;color:#F1CA81">GPU</div>
<div class="t" style="left:1096.23px;top:733.71px;color:#D7DEEA">: </div>
<div class="t" style="left:1113.77px;top:733.71px;color:#D7DEEA">Apple M1</div>
<div class="t b" style="left:1069.92px;top:751.79px;color:#F1CA81">Memory</div>
<div class="t" style="left:1122.54px;top:751.79px;color:#D7DEEA">: </div>
<div class="t" style="left:1140.08px;top:751.79px;color:#D7DEEA">2357MiB / 16384MiB</div>
<div class="t" style="left:17.52px;top:932.59px;color:#2D3441">0</div>
<div class="t" style="left:61.37px;top:932.59px;color:#2D3441">0</div>
<div class="t" style="left:96.45px;top:932.59px;color:#2D3441">htop</div>
<div class="t" style="left:1219.01px;top:932.59px;color:#D7DEEA">2021–02–15</div>
<div class="t" style="left:1333.02px;top:932.59px;color:#D7DEEA">21:14</div>
<div class="t b" style="left:1403.18px;top:932.59px;color:#2D3441">shinobu.local</div>
<svg width="1536" height="965" viewBox="0 0 1536 965"><polygon points="78.91,406.57 87.68,415.61 78.91,424.65" fill="#77C2D2"/><polygon points="192.92,406.57 201.69,415.61 192.92,424.65" fill="#394253"/><polyline points="1263.19,407.17 1254.49,415.31 1263.19,423.75" fill="none" stroke="#D7DEEA" stroke-width="1.2" stroke-linecap="round"/><polyline points="1333.35,407.17 1324.65,415.31 1333.35,423.75" fill="none" stroke="#D7DEEA" stroke-width="1.2" stroke-linecap="round"/><polygon points="1394.41,406.57 1385.64,415.61 1394.41,424.65" fill="#394253"/><polygon points="380.29,627.83 392.09,627.83 386.19,637.53" fill="none" stroke="#2D3441" stroke-width="1.5" stroke-linejoin="miter"/><polygon points="35.06,930.89 43.83,939.93 35.06,948.97" fill="#78A2C4"/><polygon points="43.83,930.89 52.60,939.93 43.83,948.97" fill="#394253"/><polyline points="78.71,931.79 87.41,939.93 78.71,948.07" fill="none" stroke="#2D3441" stroke-width="1.2" stroke-linecap="round"/><line x1="144.60" y1="936.39" x2="144.60" y2="944.19" stroke="#2D3441" stroke-width="1.4" stroke-linecap="round"/><line x1="141.22" y1="938.34" x2="147.98" y2="942.24" stroke="#2D3441" stroke-width="1.4" stroke-linecap="round"/><line x1="147.98" y1="938.34" x2="141.22" y2="942.24" stroke="#2D3441" stroke-width="1.4" stroke-linecap="round"/><polygon points="157.84,930.89 166.61,939.93 157.84,948.97" fill="#77C2D2"/><polygon points="1210.24,930.89 1201.47,939.93 1210.24,948.97" fill="#4A566C"/><polyline points="1324.58,931.49 1315.88,939.63 1324.58,948.07" fill="none" stroke="#D7DEEA" stroke-width="1.2" stroke-linecap="round"/><polygon points="1394.41,930.89 1385.64,939.93 1394.41,948.97" fill="#77C2D2"/><polygon points="799.65,462.71 803.05,462.71 807.15,469.81 803.05,476.81 799.65,476.81 803.55,469.81" fill="#E4E9F1"/><polygon points="799.65,860.47 803.05,860.47 807.15,867.57 803.05,874.57 799.65,874.57 803.55,867.57" fill="#E4E9F1"/></svg>
</div><div id="wb"></div></div></body></html>
